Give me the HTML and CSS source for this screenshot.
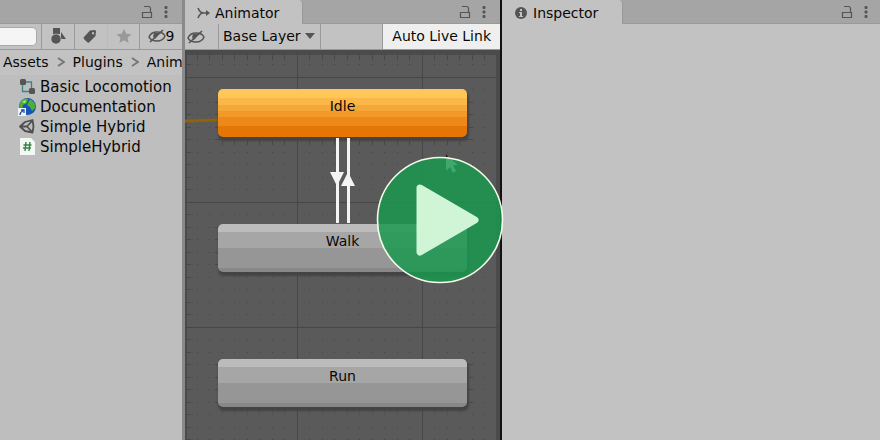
FILE: index.html
```html
<!DOCTYPE html>
<html lang="en">
<head>
<meta charset="utf-8">
<meta name="viewport" content="width=device-width, initial-scale=1">
<title>Animator</title>
<link rel="stylesheet" href="styles.css">
</head>
<body>
<svg class="defs" aria-hidden="true">
  <defs>
    <symbol id="lock" viewBox="0 0 12 14"><path d="M1.500 7.500h9v5h-9zM3 1.500h4.500q2 0 2 2v4" fill="none" stroke="currentColor" stroke-width="1.200"/></symbol>
    <symbol id="more" viewBox="0 0 4 14"><path d="M1 1h2v3H1zM.5 1.500h3v2h-3zM1 5.500h2v3H1zM.5 6h3v2h-3zM1 10h2v3H1zM.5 10.500h3v2h-3z" fill="currentColor"/></symbol>
    <symbol id="eye" viewBox="0 0 18 14"><path d="M1 8Q3 3 9 3t8 4q-2 5-8 5T1 8z" fill="none" stroke="currentColor" stroke-width="1.500"/><path d="M6 4q-2 4 1 6l5-6z" fill="currentColor"/><path d="M2 13L15 1" stroke="currentColor" stroke-width="1.700"/></symbol>
  </defs>
</svg>
<main class="app">
  <section class="panel project">
    <header class="tabs">
      <div class="tools">
        <button class="icon" aria-label="Lock"><svg class="lock"><use href="#lock"/></svg></button>
        <button class="icon" aria-label="More"><svg class="more"><use href="#more"/></svg></button>
      </div>
    </header>
    <div class="toolbar">
      <div class="search"><input type="text" aria-label="Search"></div>
      <button class="tool shapes" aria-label="Filter by type"><svg width="18" height="18" viewBox="0 0 18 18"><path d="M4 1h7v6H4zM12 5l5 7h-5z" fill="currentColor"/><circle cx="7" cy="12" r="5" fill="currentColor" stroke="#c2c2c2" stroke-width=".6"/></svg></button>
      <button class="tool tag" aria-label="Filter by label"><svg width="14" height="14" viewBox="0 0 14 14"><path d="M7 1.500L12 1l1 1-.5 5L6 13.500Q5 14 4 13L1 10Q0 9 1 8zM10 3a1.200 1.200 0 1 0 .1 0z" fill="currentColor" fill-rule="evenodd"/></svg></button>
      <button class="tool star" aria-label="Favorites"><svg width="16" height="16" viewBox="0 0 16 16"><path d="M8 1l2.200 4.800 5.300.5-4 3.500 1.200 5.200L8 12.300 3.300 15l1.200-5.200-4-3.500 5.300-.5z" fill="currentColor"/></svg></button>
      <button class="tool hidden"><svg class="eye"><use href="#eye"/></svg>9</button>
    </div>
    <nav class="crumbs" aria-label="Path">
      <a href="#assets">Assets</a><svg class="chevron" viewBox="0 0 8 10"><path d="M1 1l6 4-6 4"/></svg><a href="#plugins">Plugins</a><svg class="chevron" viewBox="0 0 8 10"><path d="M1 1l6 4-6 4"/></svg><a href="#anim">Anim</a>
    </nav>
    <ul class="files">
      <li><svg class="file" viewBox="0 0 18 18"><path d="M7 4h6.500v6M4.500 7v6.500H11" fill="none" stroke="#35858a" stroke-width="1.300"/><rect x="2" y="1" width="6" height="6" rx="1.500" fill="#555"/><rect x="11" y="10" width="6" height="6" rx="1.500" fill="#555"/></svg>Basic Locomotion</li>
      <li><svg class="file" viewBox="0 0 18 18"><circle cx="9.500" cy="8.500" r="8.500" fill="#1555ba"/><path d="M3 3q4-4 7-2l-1 4-4 2-1 4-3-2zM12 1q6 3 5 9l-3 3-2-4-3-2z" fill="#4fae35"/><path d="M4 4l4-2-1 3z" fill="#c1ed91"/><path d="M0 10h8v8H0z" fill="#eef3f8"/><path d="M2 17q0-3 3-4M3 12h3v3" fill="none" stroke="#205090" stroke-width="1.300"/></svg>Documentation</li>
      <li><svg class="file" viewBox="0 0 18 18"><path d="M2 8.500L7 4l7.500-2 1 6.500-1 6L7 13zM2 8.500h7l5.500-6M9 8.500l5.500 6" fill="none" stroke="#505050" stroke-width="1.800" stroke-linejoin="round"/></svg>Simple Hybrid</li>
      <li><svg class="file" viewBox="0 0 18 18"><path d="M2 0h11l4 4v13H2z" fill="#f4f8f4"/><path d="M8 4L7 13M12 4l-1 9M5.500 7h8M5 10h8" stroke="#358344" stroke-width="1.400"/></svg>SimpleHybrid</li>
    </ul>
  </section>

  <section class="panel animator">
    <header class="tabs">
      <h2 class="tab"><svg width="14" height="14" viewBox="0 0 14 14"><path d="M1 2q2 5 6 5h4M1 12q2-5 5-5" fill="none" stroke="currentColor" stroke-width="1.600"/><path d="M9 4l4 3-4 3z" fill="currentColor"/></svg>Animator</h2>
      <div class="tools">
        <button class="icon" aria-label="Lock"><svg class="lock"><use href="#lock"/></svg></button>
        <button class="icon" aria-label="More"><svg class="more"><use href="#more"/></svg></button>
      </div>
    </header>
    <div class="toolbar">
      <button class="eye-button" aria-label="Toggle parameters"><svg class="eye"><use href="#eye"/></svg></button>
      <button class="tool layer">Base Layer<svg width="10" height="6" viewBox="0 0 10 6"><path d="M0 0h10L5 6z" fill="#555"/></svg></button>
      <button class="tool live">Auto Live Link</button>
    </div>
    <div class="canvas">
      <svg class="wires" aria-hidden="true">
        <defs>
          <pattern id="dots" x="112" y="27" width="125" height="125" patternUnits="userSpaceOnUse">
            <path d="M0 .5h125M.5 0v125" stroke="#474747"/>
            <g stroke="#464646" stroke-dasharray="1 11 1 12">
              <path d="M0 12.500h125M0 25.500h125M0 37.500h125M0 50.500h125M0 62.500h125M0 75.500h125M0 87.500h125M0 100.500h125M0 112.500h125"/>
            </g>
          </pattern>
          <pattern id="lines" x="112" y="27" width="125" height="125" patternUnits="userSpaceOnUse">
            <path d="M12.500 0v125M25.500 0v125M37.500 0v125M50.500 0v125M62.500 0v125M75.500 0v125M87.500 0v125M100.500 0v125M112.500 0v125M0 12.500h125M0 25.500h125M0 37.500h125M0 50.500h125M0 62.500h125M0 75.500h125M0 87.500h125M0 100.500h125M0 112.500h125" stroke="#484848"/>
          </pattern>
        </defs>
        <rect width="100%" height="100%" fill="url(#dots)"/>
        <g fill="url(#lines)">
          <rect width="6" height="100%"/>
          <rect y="5" width="100%" height="5"/>
          <rect x="30" y="40" width="257" height="55"/>
          <rect x="30" y="175" width="257" height="50"/>
          <rect x="30" y="310" width="257" height="52"/>
        </g>
        <path d="M0 71l34-1" stroke="#916206" stroke-width="3"/>
      </svg>
      <div class="node idle">Idle</div>
      <div class="node walk">Walk</div>
      <div class="node run">Run</div>
      <svg class="wires" aria-hidden="true">
        <path d="M152.500 88v85M163.500 88v85" stroke="#f4f4f4" stroke-width="3"/>
        <path d="M145 122h14l-7 14zM156 136h14l-7-14z" fill="#f4f4f4"/>
      </svg>
      <svg class="cursor" viewBox="0 0 14 20"><path d="M1 1l12 10H8l3 6-3 2-3-6-4 4z" fill="#fff"/><path d="M1 0v3l3 1z" fill="#111"/></svg>
    </div>
  </section>

  <section class="panel inspector">
    <header class="tabs">
      <h2 class="tab"><svg width="12" height="12" viewBox="0 0 12 12"><circle cx="6" cy="6" r="6" fill="currentColor"/><path d="M5 2h2v2H5zM4 5h3v4h1v1H4V9h1V6H4z" fill="#c2c2c2"/></svg>Inspector</h2>
      <div class="tools">
        <button class="icon" aria-label="Lock"><svg class="lock"><use href="#lock"/></svg></button>
        <button class="icon" aria-label="More"><svg class="more"><use href="#more"/></svg></button>
      </div>
    </header>
  </section>
  <button class="play" aria-label="Play"><svg viewBox="0 0 128 128"><circle cx="64" cy="64" r="62.500" fill="#1a9850" fill-opacity=".84" stroke="#f5fbe9" stroke-width="1.600"/><path d="M44 32l55 32-55 32z" fill="#d0f5d6" stroke="#d0f5d6" stroke-width="7" stroke-linejoin="round"/></svg></button>
</main>
</body>
</html>
```
FILE: styles.css
```css
* { box-sizing: border-box; }
body { margin: 0; font: 14px/20px "DejaVu Sans", Verdana, sans-serif; color: #090909; background: #c2c2c2; }
button { font: inherit; color: inherit; border: 0; background: none; padding: 0; }
.defs { position: absolute; width: 0; height: 0; }
.app { position: relative; display: grid; grid-template-columns: 185fr 317fr 378fr; min-height: 100vh; }
.panel { display: flex; flex-direction: column; min-width: 0; overflow: hidden; background: #c2c2c2; }
.project { border-right: 3px solid #8a8a8a; background: #bebebe; }
.animator { border-right: 2px solid #111; }
.tabs { display: flex; height: 24px; background: #a5a5a5; border-bottom: 1px solid #999; }
.tab { display: flex; align-items: center; gap: 4px; height: 24px; margin: 0; padding: 2px 23px 0 12px; font: inherit; background: #c2c2c2; border-right: 1px solid #999; border-radius: 0 4px 0 0; }
.tab svg { color: #555; }
.inspector .tab { gap: 6px; padding: 2px 24px 0 13px; }
.tools { display: flex; align-items: center; gap: 11px; margin-left: auto; padding-right: 14px; color: #555; }
.inspector .tools { padding-right: 12px; }
.icon { display: flex; }
.lock { width: 12px; height: 14px; }
.more { width: 4px; height: 14px; }
.eye { width: 18px; height: 14px; color: #555; flex: none; }
.toolbar { display: flex; height: 26px; background: #c2c2c2; border-bottom: 1px solid #999; }
.tool { display: flex; align-items: center; justify-content: center; border-left: 1px solid #999; color: #555; padding-bottom: 2px; }
.search { flex: 1; min-width: 0; display: flex; align-items: center; padding-right: 4px; }
.search input { width: 100%; min-width: 0; height: 19px; border: 1px solid #aaa; border-left: 0; border-radius: 0 5px 5px 0; background: #f5f5f5; }
.shapes, .tag { width: 33px; }
.tag { padding-right: 3px; }
.star { width: 32px; border-color: #bbb; color: #999; }
.hidden { width: 43px; color: #090909; }
.crumbs { display: flex; align-items: center; height: 25px; padding: 0 0 2px 3px; background: #c2c2c2; white-space: nowrap; }
.crumbs a { color: inherit; text-decoration: none; }
.chevron { width: 8px; height: 10px; flex: none; margin: 0 8px; fill: none; stroke: #777; stroke-width: 2; }
.files { flex: 1; margin: 0; padding: 2px 0 0 18px; list-style: none; background: #bebebe; white-space: nowrap; font-size: 15px; }
.files li { display: flex; align-items: center; gap: 4px; height: 20px; }
.file { width: 18px; height: 18px; flex: none; }
.eye-button { display: flex; align-items: center; width: 33px; padding-left: 2px; }
.layer { gap: 4px; padding: 0 5px 2px 4px; border-right: 1px solid #999; color: #090909; }
.live { margin-left: auto; padding: 0 9px 2px; background: #efefef; color: #090909; }
.canvas { position: relative; flex: 1; overflow: hidden; background: #5a5a5a; box-shadow: inset 2px 0 #4b4b4b, inset -4px 0 #4b4b4b, inset 0 5px #4b4b4b; }
.wires { position: absolute; inset: 0; width: 100%; height: 100%; }
.node { position: absolute; left: 33px; width: 249px; height: 48px; padding-top: 7px; text-align: center; border-radius: 5px; box-shadow: 0 1px #444, 1px 3px 2px 1px #444; background: linear-gradient(#bcbcbc 0 8px, #a6a6a6 8px 24px, #969696 24px 44px, #888 44px); }
.idle { top: 39px; background: linear-gradient(#ffc65a 0 9px, #fbb747 9px 16px, #f5a737 16px 22px, #f39927 22px 28px, #ec891a 28px 37px, #e57605 37px); }
.walk { top: 174px; }
.run { top: 309px; }
.cursor { position: absolute; left: 260px; top: 104px; width: 14px; height: 20px; }
.play { position: absolute; top: 50%; left: 50%; width: 128px; height: 128px; transform: translate(-50%, -50%); }
.play svg { display: block; width: 100%; height: 100%; }
```
